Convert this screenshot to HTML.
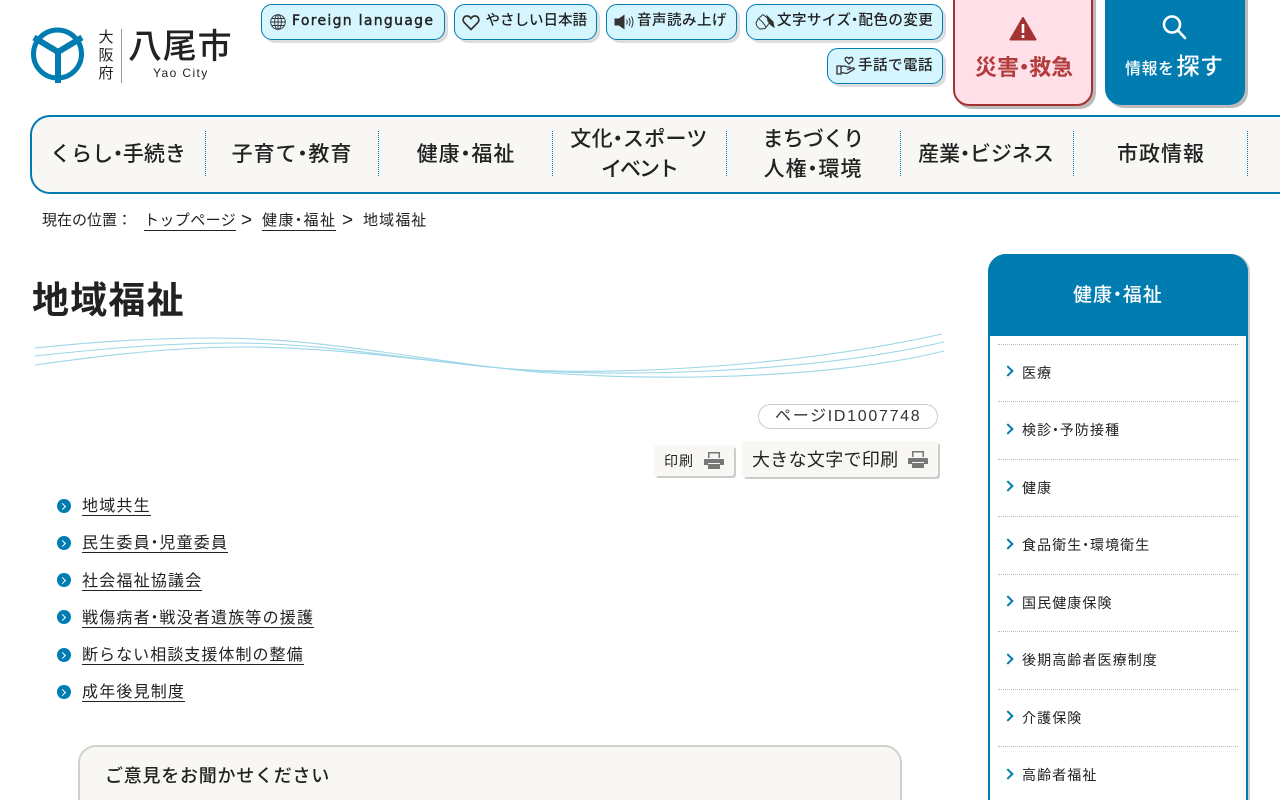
<!DOCTYPE html>
<html lang="ja"><head><meta charset="utf-8"><title>地域福祉</title>
<style>
html,body{margin:0;padding:0;width:1280px;height:800px;overflow:hidden;background:#fff}
body{position:relative;font-family:"Liberation Sans","Noto Sans CJK JP",sans-serif;color:#222}
.a{position:absolute;white-space:nowrap}
.d{margin:0 -.27em}
.b{position:absolute;box-sizing:border-box;background:#d5f5ff;border:1px solid #007cb0;border-radius:11px;box-shadow:3px 3px 0 #ddd;height:36px}
.t{position:absolute;white-space:nowrap;font-size:14.500px;font-weight:500;line-height:20px;letter-spacing:.5px;color:#222}
.n{position:absolute;text-align:center;font-size:21px;font-weight:500;line-height:30px;letter-spacing:1px;width:174px;color:#222}
.v{position:absolute;top:131px;height:45px;border-left:1px dotted #007cb0}
.l{position:absolute;left:82px;font-size:16px;line-height:24px;letter-spacing:1.200px;border-bottom:1px solid #222;white-space:nowrap;height:20px}
.bu{position:absolute;left:57px;width:14px;height:14px;border-radius:50%;background:#007cb0}
.bu:after{content:"";position:absolute;left:3px;top:4.500px;width:4px;height:4px;border-top:1.500px solid #fff;border-right:1.500px solid #fff;transform:rotate(45deg)}
.s{position:absolute;left:1022px;font-size:14px;line-height:22px;letter-spacing:1.100px;white-space:nowrap;color:#222}
.h{position:absolute;left:998px;width:240px;border-top:1px dotted #bbb}
.c{position:absolute;left:1004px;width:6px;height:6px;border-top:2px solid #007cb0;border-right:2px solid #007cb0;transform:rotate(45deg)}
</style></head><body>

<svg class="a" style="left:30px;top:25px" width="58" height="60" viewBox="30 25 58 60">
<circle cx="57.500" cy="54" r="24" fill="none" stroke="#007cb0" stroke-width="5"/>
<path d="M34 37.500L58 52L82 37.500M58 52V83" fill="none" stroke="#007cb0" stroke-width="6"/>
</svg>
<div class="a" style="left:98px;top:29px;width:16px;font-size:15px;line-height:18px;color:#222;white-space:normal;text-align:center">大<br>阪<br>府</div>
<div class="a" style="left:120.500px;top:29px;width:1.500px;height:54px;background:#999"></div>
<div class="a" style="left:128px;top:26px;font-size:34px;line-height:42px;color:#222;font-weight:500;letter-spacing:.8px">八尾市</div>
<div class="a" style="left:153px;top:65px;font-size:12px;line-height:16px;color:#222;letter-spacing:1.400px">Yao City</div>

<div class="b" style="left:261px;top:4px;width:184px"></div>
<svg class="a" style="left:270px;top:14px" width="16" height="16" viewBox="0 0 16 16" fill="none" stroke="#333" stroke-width=".9"><circle cx="8" cy="8" r="7.300"/><ellipse cx="8" cy="8" rx="3.400" ry="7.300"/><path d="M8 .7V15.300M.7 8H15.300M1.700 4.500H14.300M1.700 11.500H14.300"/></svg>
<div class="t" style="left:292px;top:11px;font-family:'DejaVu Sans',sans-serif;font-weight:400;font-size:14px;letter-spacing:1.300px;-webkit-text-stroke:.4px #222">Foreign language</div>

<div class="b" style="left:454px;top:4px;width:143px"></div>
<svg class="a" style="left:462px;top:14px" width="18" height="17" viewBox="0 0 18 17" fill="none" stroke="#333" stroke-width="1.700"><path d="M9 15.500L2.200 8.600C.2 6.400 1.200 2 4.900 2 7 2 8.300 3.200 9 4.400 9.700 3.200 11 2 13.100 2 16.800 2 17.800 6.400 15.800 8.600Z"/></svg>
<div class="t" style="left:485.500px;top:11px;letter-spacing:0">やさしい日本語</div>

<div class="b" style="left:606px;top:4px;width:131px"></div>
<svg class="a" style="left:614px;top:14px" width="22" height="16" viewBox="0 0 22 16" fill="none" stroke="#333"><path d="M1 5H5L10 1.500V14.500L5 11H1Z" fill="#333"/><path d="M12.500 5.500Q14 8 12.500 10.500M15 4Q17.200 8 15 12M17.500 2.500Q20.500 8 17.500 13.500" stroke-width="1"/></svg>
<div class="t" style="left:637px;top:11px">音声読み上げ</div>

<div class="b" style="left:746px;top:4px;width:197px"></div>
<svg class="a" style="left:755px;top:13px" width="20" height="18" viewBox="0 0 20 18" fill="none" stroke="#333" stroke-width="1"><path d="M3 6L8 1.500L16 8 10 15.500 5 16Q1.500 14 1 10Z"/><path d="M4 6Q8 9 11 14"/><path d="M12 3L18 9 19 14 16 12 13 8Z" fill="#333"/></svg>
<div class="t" style="left:777px;top:11px;letter-spacing:.45px">文字サイズ<span class="d">・</span>配色の変更</div>

<div class="b" style="left:827px;top:48px;width:116px"></div>
<svg class="a" style="left:836px;top:56px" width="20" height="20" viewBox="0 0 20 20" fill="none" stroke="#333" stroke-width="1.300"><path d="M1 10H5V18H1ZM5 11Q8 9 11 11H14Q14.500 13.500 11 13.500M5 16.500L11 17.500 18.500 13Q18 11.500 16 12L12 13.500"/><path d="M13 8L9.700 4.800C8.600 3.400 9.300 1.300 11 1.300 12 1.300 12.700 2 13 2.500 13.300 2 14 1.300 15 1.300 16.700 1.300 17.400 3.400 16.300 4.800Z"/></svg>
<div class="t" style="left:858px;top:55px;line-height:22px">手話で電話</div>

<div class="a" style="left:953px;top:-4px;width:140px;height:110px;box-sizing:border-box;background:#ffe0e8;border:2px solid #a33333;border-radius:0 0 16px 16px;box-shadow:3px 3px 0 #bbb"></div>
<svg class="a" style="left:1009px;top:16px" width="28" height="26" viewBox="0 0 28 26"><path d="M14 2L26.500 23.500H1.500Z" fill="#a33333" stroke="#a33333" stroke-width="2" stroke-linejoin="round"/><path d="M14 8V17M14 19V22" stroke="#fff" stroke-width="2.600"/></svg>
<div class="a" style="left:975px;top:53px;font-size:22px;line-height:30px;font-weight:700;color:#b23c3c;letter-spacing:0">災害<span class="d">・</span>救急</div>

<div class="a" style="left:1105px;top:-4px;width:140px;height:109px;background:#007cb0;border-radius:0 0 16px 16px;box-shadow:3px 3px 0 #bbb"></div>
<svg class="a" style="left:1159px;top:13px" width="28" height="28" viewBox="0 0 28 28" fill="none" stroke="#fff" stroke-width="2.600"><circle cx="13" cy="11.500" r="8"/><path d="M19 17.500L26 25" stroke-linecap="round"/></svg>
<div class="a" style="left:1125px;top:49px;font-size:16px;line-height:34px;color:#fff;letter-spacing:.5px;font-weight:500">情報を<span style="font-size:23px;letter-spacing:.5px;margin-left:2px">探す</span></div>

<div class="a" style="left:30px;top:115px;width:1270px;height:79px;box-sizing:border-box;background:#f9f7f4;border:2px solid #007cb0;border-radius:20px 0 0 20px"></div>
<div class="v" style="left:205px"></div><div class="v" style="left:378px"></div><div class="v" style="left:552px"></div><div class="v" style="left:726px"></div><div class="v" style="left:900px"></div><div class="v" style="left:1073px"></div><div class="v" style="left:1247px"></div>
<div class="n" style="left:31px;top:140px;letter-spacing:0">くらし<span class="d">・</span>手続き</div>
<div class="n" style="left:205px;top:140px">子育て<span class="d">・</span>教育</div>
<div class="n" style="left:379px;top:140px">健康<span class="d">・</span>福祉</div>
<div class="n" style="left:552px;top:125px;letter-spacing:.3px">文化<span class="d">・</span>スポーツ<br><span style="letter-spacing:-2px">イベント</span></div>
<div class="n" style="left:726px;top:125px"><span style="letter-spacing:-.8px">まちづくり</span><br>人権<span class="d">・</span>環境</div>
<div class="n" style="left:899px;top:140px;letter-spacing:0">産業<span class="d">・</span>ビジネス</div>
<div class="n" style="left:1074px;top:140px">市政情報</div>

<div class="a" style="left:42px;top:211px;font-size:15px;line-height:20px;letter-spacing:0">現在の位置：</div>
<div class="a" style="left:144px;top:210px;font-size:15px;line-height:22px;letter-spacing:.4px;border-bottom:1px solid #222;height:20px">トップページ</div>
<div class="a" style="left:241px;top:210px;font-size:19px;line-height:22px">&gt;</div>
<div class="a" style="left:262px;top:210px;font-size:15px;line-height:22px;letter-spacing:1.500px;border-bottom:1px solid #222;height:20px">健康<span class="d">・</span>福祉</div>
<div class="a" style="left:342px;top:210px;font-size:19px;line-height:22px">&gt;</div>
<div class="a" style="left:363px;top:211px;font-size:15px;line-height:20px;letter-spacing:1.100px">地域福祉</div>

<div class="a" style="left:32px;top:275px;font-size:37px;line-height:52px;font-weight:700;letter-spacing:1.200px;color:#222">地域福祉</div>
<svg class="a" style="left:30px;top:325px" width="920" height="60" viewBox="30 325 920 60" fill="none" stroke="#9cd6e8" stroke-width="1.100">
<path d="M35 348C100 341 165 338 215 338C320 338 410 358 500 368C600 377 790 368 942 334"/>
<path d="M35 356C100 349 165 343 235 343C325 343 410 360 500 368C600 378 800 375 944 342"/>
<path d="M35 365C100 356 170 347 245 347C330 347 420 360 500 368C600 381 810 384 944 351"/>
</svg>

<div class="a" style="left:758px;top:404px;width:180px;height:25px;box-sizing:border-box;border:1px solid #ccc;border-radius:13px"></div>
<div class="a" style="left:775px;top:406px;font-size:16px;line-height:21px;letter-spacing:1.700px;color:#333">ページID1007748</div>

<div class="a" style="left:654px;top:445px;width:80px;height:31px;background:#f9f7f4;border-radius:3px;box-shadow:2px 2px 0 #ccc"></div>
<div class="a" style="left:664px;top:451px;font-size:14px;line-height:20px;letter-spacing:1px">印刷</div>
<svg class="a" style="left:704px;top:452px" width="20" height="17" viewBox="0 0 20 17"><path d="M4 0H16V6H4Z" fill="#777"/><path d="M5.500 1.500H14.500V6H5.500Z" fill="#f8f6f3"/><path d="M1 7H19Q20 7 20 8V13H16V11H4V13H0V8Q0 7 1 7Z" fill="#777"/><path d="M4 12H16V17H4Z" fill="#777"/></svg>

<div class="a" style="left:742px;top:441px;width:196px;height:36px;background:#f9f7f4;border-radius:3px;box-shadow:2px 2px 0 #ccc"></div>
<div class="a" style="left:752px;top:448px;font-size:18px;line-height:25px;letter-spacing:.3px">大きな文字で印刷</div>
<svg class="a" style="left:908px;top:451px" width="20" height="17" viewBox="0 0 20 17"><path d="M4 0H16V6H4Z" fill="#777"/><path d="M5.500 1.500H14.500V6H5.500Z" fill="#f8f6f3"/><path d="M1 7H19Q20 7 20 8V13H16V11H4V13H0V8Q0 7 1 7Z" fill="#777"/><path d="M4 12H16V17H4Z" fill="#777"/></svg>

<div class="bu" style="top:499px"></div><div class="l" style="top:495px">地域共生</div>
<div class="bu" style="top:536px"></div><div class="l" style="top:532px">民生委員<span class="d">・</span>児童委員</div>
<div class="bu" style="top:573px"></div><div class="l" style="top:570px">社会福祉協議会</div>
<div class="bu" style="top:610px"></div><div class="l" style="top:607px">戦傷病者<span class="d">・</span>戦没者遺族等の援護</div>
<div class="bu" style="top:648px"></div><div class="l" style="top:644px;letter-spacing:1.050px">断らない相談支援体制の整備</div>
<div class="bu" style="top:685px"></div><div class="l" style="top:681px">成年後見制度</div>

<div class="a" style="left:78px;top:745px;width:824px;height:100px;box-sizing:border-box;background:#f9f7f4;border:2px solid #d2d0ca;border-radius:18px"></div>
<div class="a" style="left:105px;top:763px;font-size:18px;line-height:26px;font-weight:500;letter-spacing:.75px">ご意見をお聞かせください</div>

<div class="a" style="left:988px;top:254px;width:260px;height:600px;box-sizing:border-box;background:#fff;border:2px solid #007cb0;border-radius:18px 18px 0 0;box-shadow:2px 0 0 #ccc"></div>
<div class="a" style="left:988px;top:254px;width:260px;height:82px;background:#007cb0;border-radius:18px 18px 0 0"></div>
<div class="a" style="left:1073px;top:282px;font-size:19px;line-height:28px;font-weight:500;color:#fff;letter-spacing:1px">健康<span class="d">・</span>福祉</div>

<div class="h" style="top:344px"></div><div class="c" style="top:367px"></div><div class="s" style="top:362px">医療</div>
<div class="h" style="top:401px"></div><div class="c" style="top:425px"></div><div class="s" style="top:419px">検診<span class="d">・</span>予防接種</div>
<div class="h" style="top:459px"></div><div class="c" style="top:482px"></div><div class="s" style="top:477px">健康</div>
<div class="h" style="top:516px"></div><div class="c" style="top:540px"></div><div class="s" style="top:534px">食品衛生<span class="d">・</span>環境衛生</div>
<div class="h" style="top:574px"></div><div class="c" style="top:597px"></div><div class="s" style="top:592px">国民健康保険</div>
<div class="h" style="top:631px"></div><div class="c" style="top:655px"></div><div class="s" style="top:649px">後期高齢者医療制度</div>
<div class="h" style="top:689px"></div><div class="c" style="top:712px"></div><div class="s" style="top:707px">介護保険</div>
<div class="h" style="top:746px"></div><div class="c" style="top:770px"></div><div class="s" style="top:764px">高齢者福祉</div>
</body></html>
